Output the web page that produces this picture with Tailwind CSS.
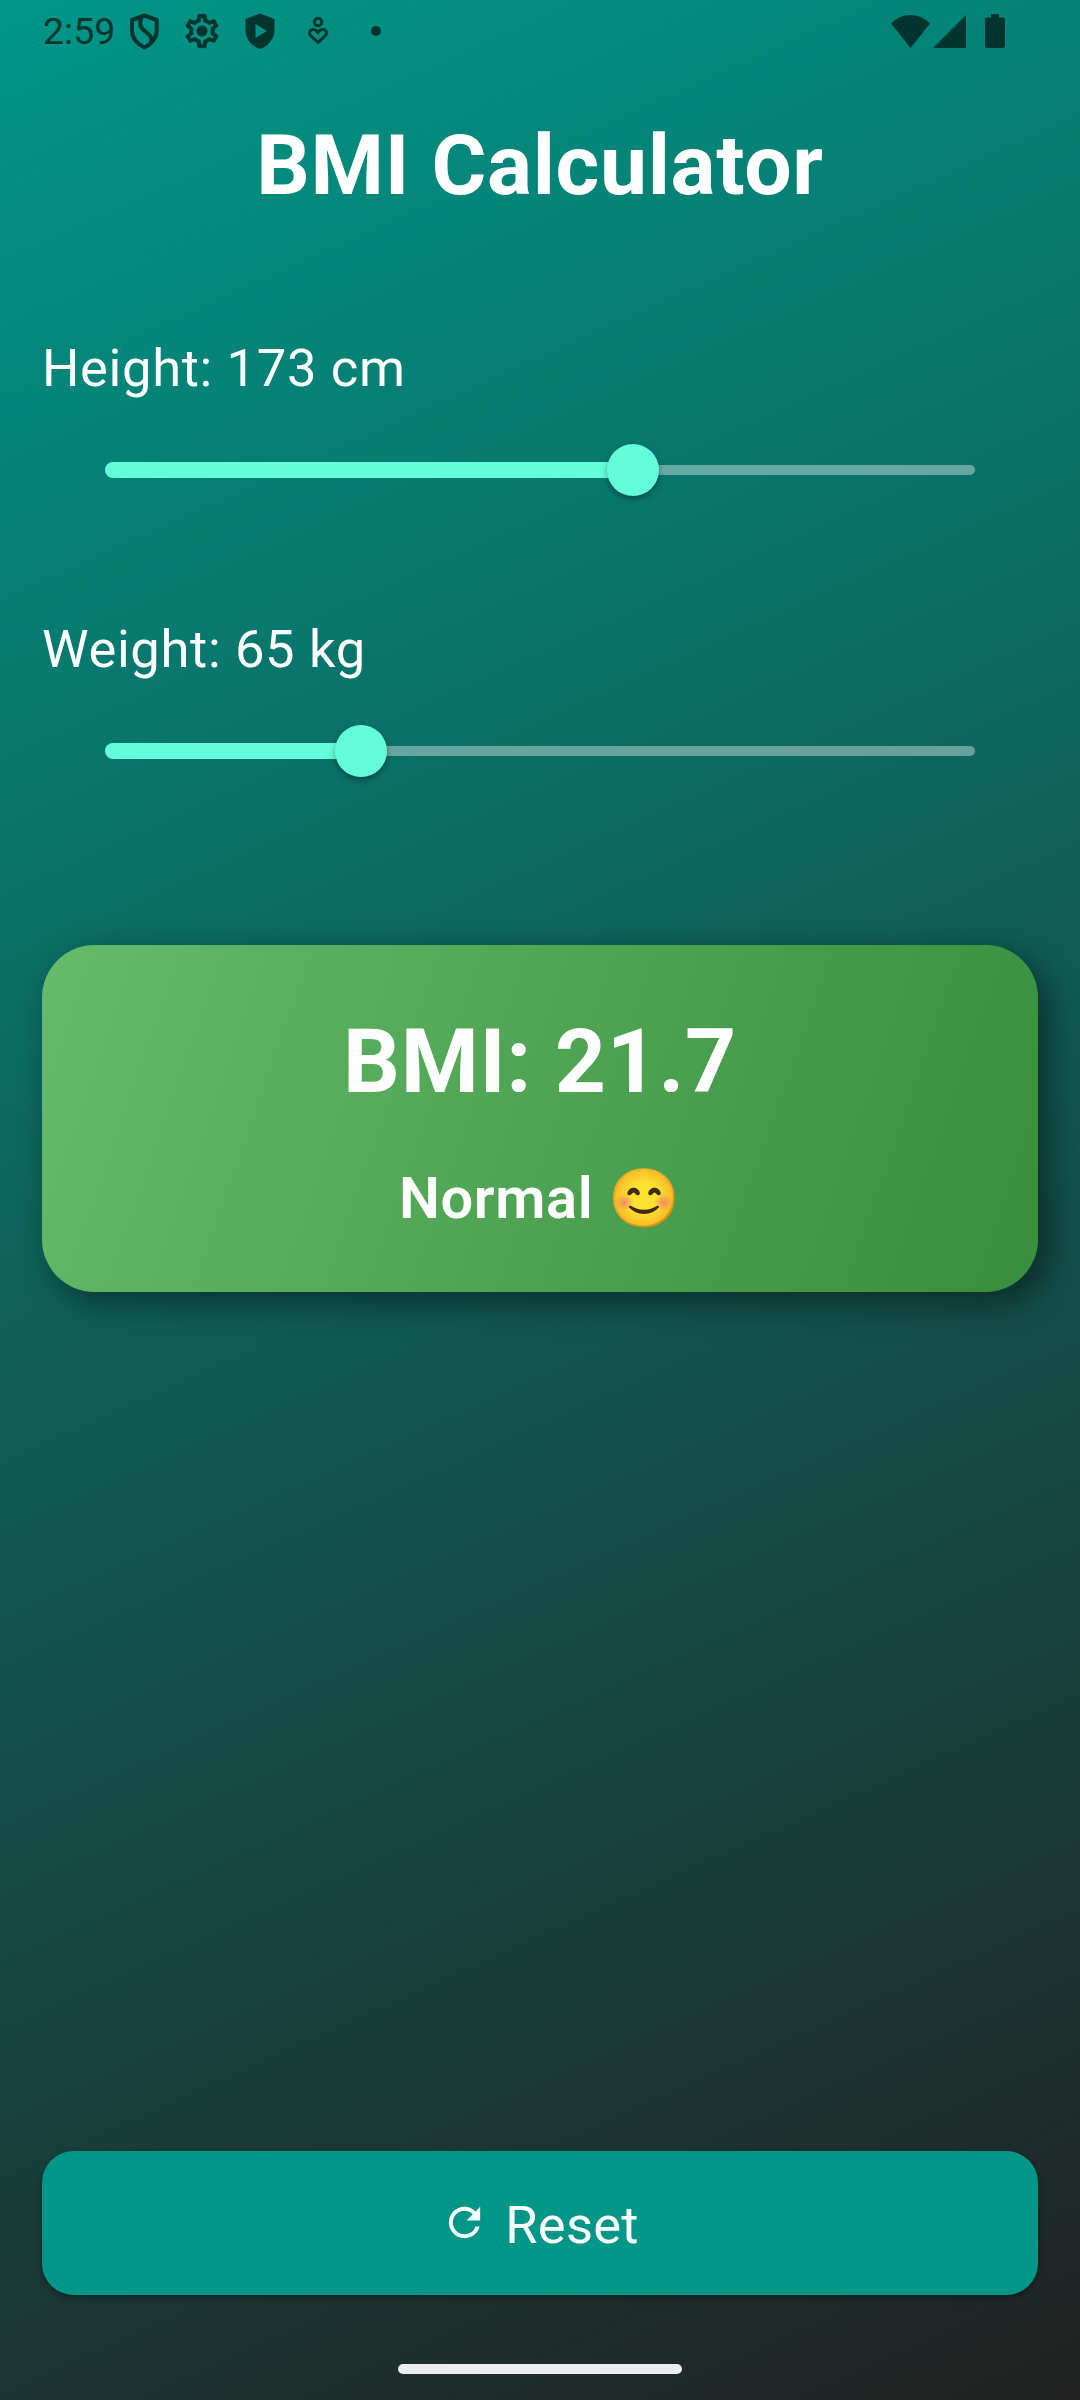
<!DOCTYPE html>
<html lang="en">
<head>
<meta charset="utf-8">
<title>BMI Calculator</title>
<script src="https://cdn.jsdelivr.net/npm/@tailwindcss/browser@4"></script>
</head>
<body>
<div class="flex h-[2400px] w-[1080px] flex-col overflow-hidden bg-[linear-gradient(155.77deg,#009688,#212121)] font-['Roboto','Noto_Color_Emoji',sans-serif] text-white">

  <!-- Status bar -->
  <header class="flex h-[62px] shrink-0 items-center pl-[43px] pr-[75px] text-[#00352f]">
    <span class="w-[82px] text-[37.5px] leading-[62px]">2:59</span>
    <svg class="ml-[3px] h-[38px] w-[34px]" viewBox="0 0 34 38" fill="none" stroke="currentColor" stroke-width="4" stroke-linejoin="round"><path d="M16.400 3.500L28.700 8V19C28.700 26 23 32.500 16.400 35.500C9.500 32.500 4 26 4 19V8Z"/><path d="M13.500 5C10.500 14 13 16 18 20C24 24.500 24 27 22.500 31"/></svg>
    <svg class="ml-[20px] h-[40px] w-[40px]" viewBox="0 0 24 24" fill="currentColor" stroke="currentColor" stroke-width=".4"><path d="M19.430 12.980c.04-.32.07-.64.07-.98s-.03-.66-.07-.98l2.110-1.650c.19-.15.24-.42.12-.64l-2-3.460c-.09-.16-.26-.25-.44-.25-.06 0-.12.01-.17.03l-2.490 1c-.52-.4-1.080-.73-1.690-.98l-.38-2.650C14.460 2.180 14.250 2 14 2h-4c-.25 0-.46.18-.49.42l-.38 2.650c-.61.25-1.170.59-1.690.98l-2.490-1c-.06-.02-.12-.03-.18-.03-.17 0-.34.09-.43.25l-2 3.460c-.13.22-.07.49.12.64l2.110 1.650c-.04.32-.07.65-.07.98s.03.66.07.98l-2.110 1.650c-.19.15-.24.42-.12.64l2 3.460c.09.16.26.25.44.25.06 0 .12-.01.17-.03l2.490-1c.52.4 1.080.73 1.690.98l.38 2.650c.03.24.24.42.49.42h4c.25 0 .46-.18.49-.42l.38-2.650c.61-.25 1.170-.59 1.690-.98l2.490 1c.06.02.12.03.18.03.17 0 .34-.09.43-.25l2-3.460c.12-.22.07-.49-.12-.64l-2.110-1.650zm-1.980-1.710c.04.31.05.52.05.73 0 .21-.02.43-.05.73l-.14 1.130.89.7 1.080.84-.7 1.210-1.270-.51-1.040-.42-.9.68c-.43.32-.84.56-1.250.73l-1.060.43-.16 1.130-.2 1.350h-1.400l-.19-1.350-.16-1.130-1.060-.43c-.43-.18-.83-.41-1.230-.71l-.91-.7-1.060.43-1.270.51-.7-1.210 1.080-.84.89-.7-.14-1.130c-.03-.31-.05-.54-.05-.74s.02-.43.05-.73l.14-1.130-.89-.7-1.080-.84.7-1.210 1.270.51 1.040.42.9-.68c.43-.32.84-.56 1.250-.73l1.060-.43.16-1.130.2-1.350h1.390l.19 1.350.16 1.130 1.060.43c.43.18.83.41 1.230.71l.91.7 1.060-.43 1.270-.51.7 1.210-1.070.85-.89.7.14 1.130z"/><circle cx="12" cy="12" r="3.100"/></svg>
    <svg class="ml-[21px] h-[38px] w-[34px]" viewBox="0 0 34 38" fill="currentColor" fill-rule="evenodd"><path d="M17 1.500L31.500 7V18C31.500 27 25 34.500 17 37C9 34.500 2.500 27 2.500 18V7ZM12.500 12V26L24 19Z"/></svg>
    <svg class="ml-[29px] h-[32px] w-[24px]" viewBox="0 0 24 32" fill="none" stroke="currentColor" stroke-width="3"><circle cx="12" cy="7" r="3.700"/><path d="M12 27.500L4.500 20.500C2.500 18 3.500 15 6.500 14.500C9 14.200 10.500 15.500 12 17.500C13.500 15.500 15 14.200 17.500 14.500C20.500 15 21.500 18 19.500 20.500Z"/></svg>
    <span class="ml-[41px] size-[10px] rounded-full bg-current"></span>
    <svg class="ml-auto h-[33px] w-[39px]" viewBox="0 0 39 33" fill="currentColor"><path d="M0 8.500Q8 0 19.500 0T39 8.500L19.500 33Z"/></svg>
    <svg class="ml-[3px] h-[33px] w-[33px]" viewBox="0 0 33 33" fill="currentColor"><path d="M0 33H33V0Z"/></svg>
    <svg class="ml-[19px] h-[34px] w-[20px]" viewBox="0 0 20 34" fill="currentColor"><path d="M6 0H14V3.500H18Q20 3.500 20 5.500V32Q20 34 18 34H2Q0 34 0 32V5.500Q0 3.500 2 3.500H6Z"/></svg>
  </header>

  <main class="flex flex-1 flex-col px-[42px] pt-[44px] tracking-[0.656px]">
    <h1 class="text-center text-[84px] font-bold leading-[120px]">BMI Calculator</h1>

    <section class="mt-[104px]">
      <p class="h-[77px] text-[52.5px] leading-[76px]">Height: 173 cm</p>
      <div class="flex h-[126px] items-center px-[63px]">
        <div class="h-[16px] w-[528px] rounded-l-full bg-[#64ffda]"></div>
        <div class="z-10 -ml-[26px] size-[52px] rounded-full bg-[#64ffda] shadow-[0_3px_6px_rgba(0,0,0,0.35)]"></div>
        <div class="-ml-[26px] h-[10px] flex-1 rounded-r-full bg-white/38"></div>
      </div>
    </section>

    <section class="mt-[78px]">
      <p class="h-[77px] text-[52.5px] leading-[76px]">Weight: 65 kg</p>
      <div class="flex h-[126px] items-center px-[63px]">
        <div class="h-[16px] w-[256px] rounded-l-full bg-[#64ffda]"></div>
        <div class="z-10 -ml-[26px] size-[52px] rounded-full bg-[#64ffda] shadow-[0_3px_6px_rgba(0,0,0,0.35)]"></div>
        <div class="-ml-[26px] h-[10px] flex-1 rounded-r-full bg-white/38"></div>
      </div>
    </section>

    <section class="mt-[131px] h-[347px] rounded-[52.5px] bg-[linear-gradient(109.2deg,#66bb6a,#388e3c)] pt-[53px] text-center shadow-[10.5px_10.5px_33px_rgba(0,0,0,0.45)]">
      <p class="text-[89.25px] font-bold leading-[127px]">BMI: 21.7</p>
      <p class="mt-[32px] h-[82px] text-[57.75px] font-semibold leading-[82px]">Normal 😊</p>
    </section>

    <button class="mt-auto flex h-[144px] items-center justify-center gap-[17px] rounded-[31.5px] bg-[#009688] text-[52.5px] leading-[75px] tracking-[0.26px] shadow-[0_3px_6px_rgba(0,0,0,0.3)]">
      <svg class="-mt-[2px] size-[47px]" viewBox="0 0 24 24" fill="currentColor"><path d="M17.650 6.350C16.200 4.900 14.210 4 12 4c-4.420 0-7.990 3.580-7.990 8s3.570 8 7.990 8c3.730 0 6.840-2.550 7.730-6h-2.080c-.82 2.330-3.040 4-5.650 4-3.310 0-6-2.690-6-6s2.690-6 6-6c1.660 0 3.140.69 4.220 1.780L13 11h7V4l-2.350 2.350z"/></svg>
      <span class="mt-[4px]">Reset</span>
    </button>
  </main>

  <footer class="flex h-[105px] shrink-0 justify-center pt-[69px]">
    <div class="h-[10px] w-[284px] rounded-full bg-[#ebeeed]"></div>
  </footer>
</div>
</body>
</html>
